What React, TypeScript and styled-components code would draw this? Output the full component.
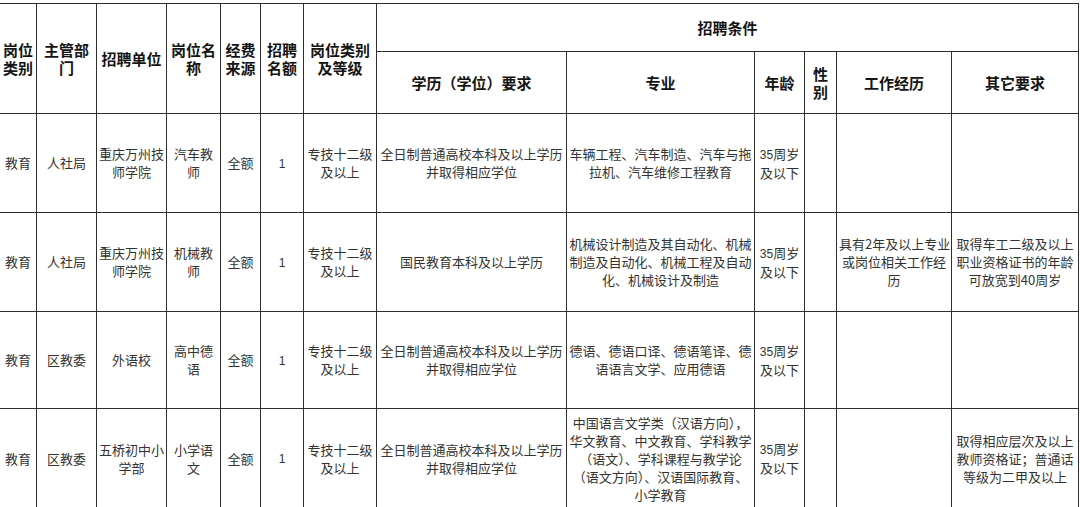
import styled, { createGlobalStyle } from "styled-components";

const GlobalStyle = createGlobalStyle`
  html, body {
    margin: 0;
    padding: 0;
    background: #ffffff;
    overflow: hidden;
  }
  body {
    font-family: "Noto Sans CJK SC", "Noto Sans", sans-serif;
  }
`;

const Page = styled.div`
  width: 1080px;
  height: 507px;
  padding-top: 3px;
  box-sizing: border-box;
  background: #fff;
  overflow: hidden;
`;

const Table = styled.table`
  border-collapse: collapse;
  table-layout: fixed;
  width: 1079px;
  margin-left: -1px;
`;

const HeadRow = styled.tr<{ $h: number }>`
  height: ${(p) => p.$h}px;
`;

const Row = styled.tr<{ $h: number }>`
  height: ${(p) => p.$h}px;
`;

const Th = styled.th`
  border: 1px solid #2e2e2e;
  padding: 0 2px;
  font-size: 15px;
  line-height: 18px;
  font-weight: 700;
  color: #141414;
  text-align: center;
  vertical-align: middle;
  white-space: nowrap;
`;

const Td = styled.td`
  border: 1px solid #2e2e2e;
  padding: 0 2px;
  font-size: 13px;
  line-height: 18px;
  font-weight: 400;
  color: #333;
  text-align: center;
  vertical-align: middle;
  white-space: nowrap;
`;

const Num = styled.span`
  font-family: "Liberation Sans", Arial, sans-serif;
  font-size: 12px;
`;

const colWidths = [37, 60, 70, 54, 40, 43, 73, 190, 188, 50, 32, 115, 127];

type Job = {
  unit: string[];
  name: string[];
  dept: string;
  edu: string[];
  major: string[];
  exp: string[];
  other: string[];
  h: number;
};

const jobs: Job[] = [
  {
    dept: "人社局",
    unit: ["重庆万州技", "师学院"],
    name: ["汽车教", "师"],
    edu: ["全日制普通高校本科及以上学历", "并取得相应学位"],
    major: ["车辆工程、汽车制造、汽车与拖", "拉机、汽车维修工程教育"],
    exp: [],
    other: [],
    h: 99,
  },
  {
    dept: "人社局",
    unit: ["重庆万州技", "师学院"],
    name: ["机械教", "师"],
    edu: ["国民教育本科及以上学历"],
    major: [
      "机械设计制造及其自动化、机械",
      "制造及自动化、机械工程及自动",
      "化、机械设计及制造",
    ],
    exp: ["具有2年及以上专业", "或岗位相关工作经", "历"],
    other: ["取得车工二级及以上", "职业资格证书的年龄", "可放宽到40周岁"],
    h: 99,
  },
  {
    dept: "区教委",
    unit: ["外语校"],
    name: ["高中德", "语"],
    edu: ["全日制普通高校本科及以上学历", "并取得相应学位"],
    major: ["德语、德语口译、德语笔译、德", "语语言文学、应用德语"],
    exp: [],
    other: [],
    h: 97,
  },
  {
    dept: "区教委",
    unit: ["五桥初中小", "学部"],
    name: ["小学语", "文"],
    edu: ["全日制普通高校本科及以上学历", "并取得相应学位"],
    major: [
      "中国语言文学类（汉语方向），",
      "华文教育、中文教育、学科教学",
      "（语文）、学科课程与教学论",
      "（语文方向）、汉语国际教育、",
      "小学教育",
    ],
    exp: [],
    other: ["取得相应层次及以上", "教师资格证；普通话", "等级为二甲及以上"],
    h: 100,
  },
];

const Lines = ({ lines }: { lines: string[] }) => (
  <>
    {lines.map((l, i) => (
      <span key={i}>
        {i > 0 && <br />}
        {l}
      </span>
    ))}
  </>
);

export default function App() {
  return (
    <Page>
      <GlobalStyle />
      <Table>
        <colgroup>
          {colWidths.map((w, i) => (
            <col key={i} style={{ width: w }} />
          ))}
        </colgroup>
        <thead>
          <HeadRow $h={48}>
            <Th rowSpan={2}>
              岗位
              <br />
              类别
            </Th>
            <Th rowSpan={2}>
              主管部
              <br />门
            </Th>
            <Th rowSpan={2}>招聘单位</Th>
            <Th rowSpan={2}>
              岗位名
              <br />称
            </Th>
            <Th rowSpan={2}>
              经费
              <br />
              来源
            </Th>
            <Th rowSpan={2}>
              招聘
              <br />
              名额
            </Th>
            <Th rowSpan={2}>
              岗位类别
              <br />
              及等级
            </Th>
            <Th colSpan={6}>招聘条件</Th>
          </HeadRow>
          <HeadRow $h={62}>
            <Th>学历（学位）要求</Th>
            <Th>专业</Th>
            <Th>年龄</Th>
            <Th>
              性<br />别
            </Th>
            <Th>工作经历</Th>
            <Th>其它要求</Th>
          </HeadRow>
        </thead>
        <tbody>
          {jobs.map((j, i) => (
            <Row key={i} $h={j.h}>
              <Td>教育</Td>
              <Td>{j.dept}</Td>
              <Td>
                <Lines lines={j.unit} />
              </Td>
              <Td>
                <Lines lines={j.name} />
              </Td>
              <Td>全额</Td>
              <Td>
                <Num>1</Num>
              </Td>
              <Td>
                专技十二级
                <br />
                及以上
              </Td>
              <Td>
                <Lines lines={j.edu} />
              </Td>
              <Td>
                <Lines lines={j.major} />
              </Td>
              <Td>
                <Num>35</Num>周岁
                <br />
                及以下
              </Td>
              <Td />
              <Td>
                <Lines lines={j.exp} />
              </Td>
              <Td>
                <Lines lines={j.other} />
              </Td>
            </Row>
          ))}
        </tbody>
      </Table>
    </Page>
  );
}
